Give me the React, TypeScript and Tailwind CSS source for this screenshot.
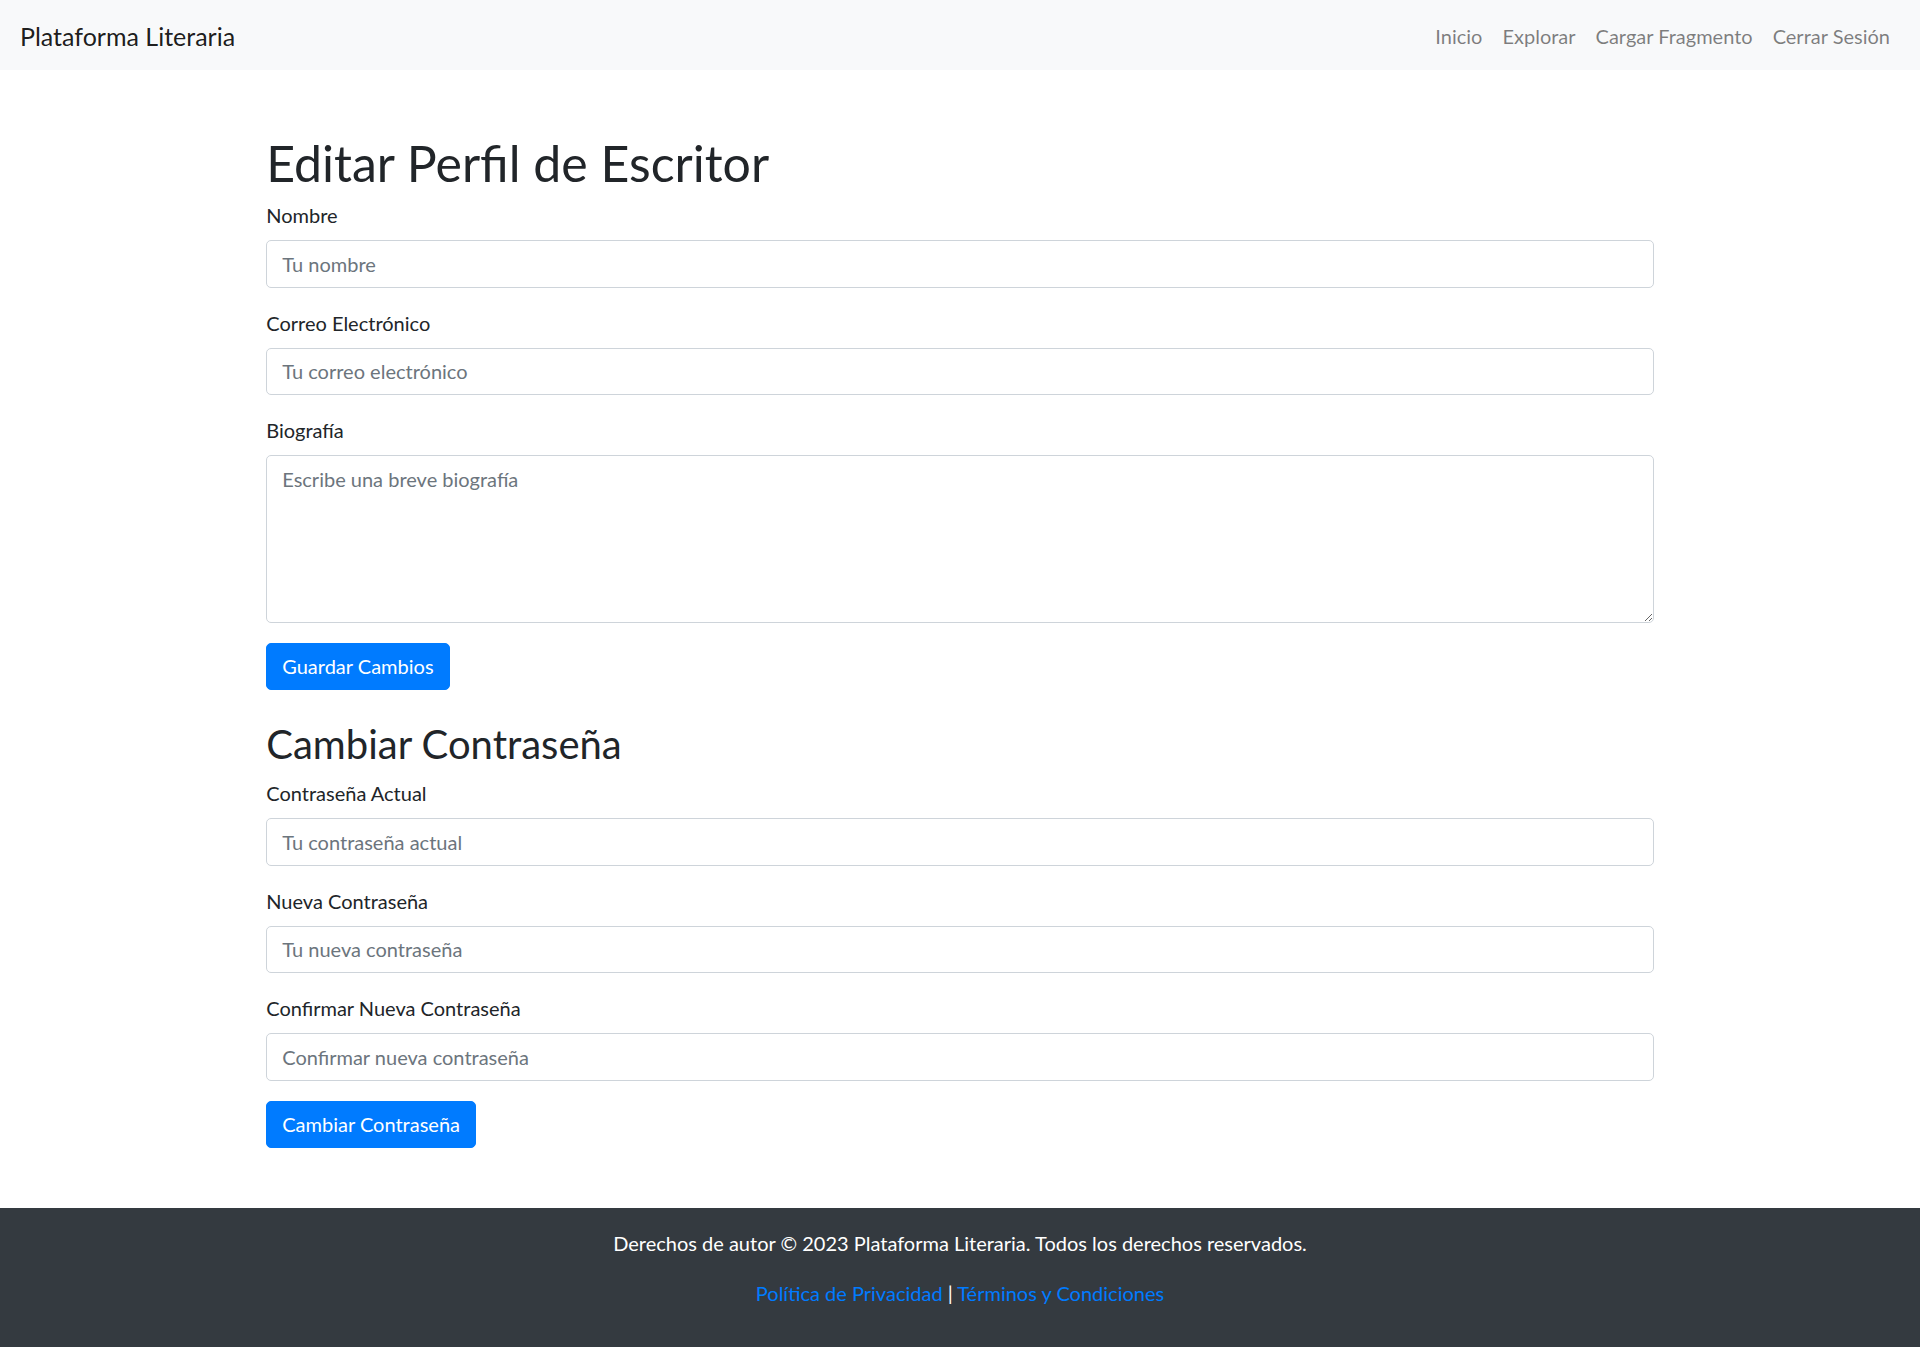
import React from "react";

const font = { fontFamily: "Lato, 'Liberation Sans', sans-serif" };

const inputCls =
  "block w-full h-[47.5px] px-[15px] py-[7.5px] text-[20px] leading-[30px] text-[#495057] bg-white border border-[#ced4da] rounded-[5px] placeholder:text-[#6c757d] outline-none";

function Field({ label, placeholder, type = "text" }: { label: string; placeholder: string; type?: string }) {
  return (
    <div className="mb-[20px]">
      <label className="block mb-[10px] text-[20px] leading-[30px] text-[#212529]">{label}</label>
      <input type={type} placeholder={placeholder} className={inputCls} />
    </div>
  );
}

export default function App() {
  return (
    <div style={font} className="min-h-screen bg-white text-[#212529] text-[20px] leading-[30px]">
      {/* Navbar */}
      <nav className="h-[70px] bg-[#f8f9fa] px-[20px] flex items-center justify-between">
        <a className="mt-[3px] text-[25px] leading-[37.5px] text-black/90">Plataforma Literaria</a>
        <ul className="flex mt-[2px]">
          {["Inicio", "Explorar", "Cargar Fragmento", "Cerrar Sesión"].map((l) => (
            <li key={l}>
              <a className="block px-[10px] py-[10px] text-[20px] leading-[30px] text-black/50">{l}</a>
            </li>
          ))}
        </ul>
      </nav>

      <div className="w-[1425px] mx-auto px-[18.75px] mt-[60px]">
        <h1 className="pt-[3px] text-[50px] leading-[60px] font-normal mb-[7px]">Editar Perfil de Escritor</h1>
        <form>
          <Field label="Nombre" placeholder="Tu nombre" />
          <Field label="Correo Electrónico" placeholder="Tu correo electrónico" type="email" />
          <div className="mb-[20px]">
            <label className="block mb-[10px] text-[20px] leading-[30px]">Biografía</label>
            <textarea
              rows={5}
              placeholder="Escribe una breve biografía"
              className="block w-full h-[167.5px] px-[15px] py-[7.5px] text-[20px] leading-[30px] text-[#495057] bg-white border border-[#ced4da] rounded-[5px] placeholder:text-[#6c757d] outline-none"
            />
          </div>
          <button type="button" className="h-[47.5px] px-[15px] text-[20px] leading-[30px] text-white bg-[#007bff] border border-[#007bff] rounded-[5px]">
            Guardar Cambios
          </button>
        </form>

        <h2 className="mt-[30px] mb-[10px] text-[40px] leading-[48px] font-normal">Cambiar Contraseña</h2>
        <form>
          <Field label="Contraseña Actual" placeholder="Tu contraseña actual" />
          <Field label="Nueva Contraseña" placeholder="Tu nueva contraseña" />
          <Field label="Confirmar Nueva Contraseña" placeholder="Confirmar nueva contraseña" />
          <button type="button" className="h-[47.5px] px-[15px] text-[20px] leading-[30px] text-white bg-[#007bff] border border-[#007bff] rounded-[5px]">
            Cambiar Contraseña
          </button>
        </form>
      </div>

      <footer className="mt-[60px] bg-[#343a40] text-white text-center py-[20px]">
        <p className="mb-[20px]">Derechos de autor © 2023 Plataforma Literaria. Todos los derechos reservados.</p>
        <p className="mb-[20px]">
          <a className="text-[#007bff]">Política de Privacidad</a> | <a className="text-[#007bff]">Términos y Condiciones</a>
        </p>
      </footer>
    </div>
  );
}
